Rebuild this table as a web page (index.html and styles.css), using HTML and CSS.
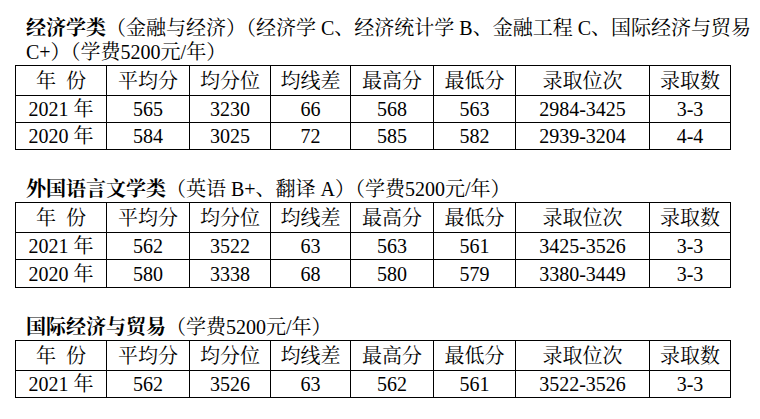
FILE: index.html
```html
<!DOCTYPE html>
<html lang="zh-CN">
<head>
<meta charset="utf-8">
<title>录取数据</title>
<link rel="stylesheet" href="styles.css">
</head>
<body>
<div class="page">
  <section class="block">
    <div class="title"><b>经济学类</b>（金融与经济）（经济学 C、经济统计学 B、金融工程 C、国际经济与贸易<br>C+）（学费5200元/年）</div>
    <table class="grid">
      <colgroup><col class="c1"><col class="c2"><col class="c3"><col class="c4"><col class="c5"><col class="c6"><col class="c7"><col class="c8"></colgroup>
      <tr class="head"><td>年&ensp;份</td><td>平均分</td><td>均分位</td><td>均线差</td><td>最高分</td><td>最低分</td><td>录取位次</td><td>录取数</td></tr>
      <tr><td>2021 年</td><td>565</td><td>3230</td><td>66</td><td>568</td><td>563</td><td>2984-3425</td><td>3-3</td></tr>
      <tr><td>2020 年</td><td>584</td><td>3025</td><td>72</td><td>585</td><td>582</td><td>2939-3204</td><td>4-4</td></tr>
    </table>
  </section>
  <section class="block">
    <div class="title"><b>外国语言文学类</b>（英语 B+、翻译 A）（学费5200元/年）</div>
    <table class="grid">
      <colgroup><col class="c1"><col class="c2"><col class="c3"><col class="c4"><col class="c5"><col class="c6"><col class="c7"><col class="c8"></colgroup>
      <tr class="head"><td>年&ensp;份</td><td>平均分</td><td>均分位</td><td>均线差</td><td>最高分</td><td>最低分</td><td>录取位次</td><td>录取数</td></tr>
      <tr><td>2021 年</td><td>562</td><td>3522</td><td>63</td><td>563</td><td>561</td><td>3425-3526</td><td>3-3</td></tr>
      <tr class="tall"><td>2020 年</td><td>580</td><td>3338</td><td>68</td><td>580</td><td>579</td><td>3380-3449</td><td>3-3</td></tr>
    </table>
  </section>
  <section class="block">
    <div class="title"><b>国际经济与贸易</b>（学费5200元/年）</div>
    <table class="grid">
      <colgroup><col class="c1"><col class="c2"><col class="c3"><col class="c4"><col class="c5"><col class="c6"><col class="c7"><col class="c8"></colgroup>
      <tr class="head"><td>年&ensp;份</td><td>平均分</td><td>均分位</td><td>均线差</td><td>最高分</td><td>最低分</td><td>录取位次</td><td>录取数</td></tr>
      <tr><td>2021 年</td><td>562</td><td>3526</td><td>63</td><td>562</td><td>561</td><td>3522-3526</td><td>3-3</td></tr>
    </table>
  </section>
</div>
</body>
</html>
```

FILE: styles.css
```css
html, body {
  margin: 0;
  padding: 0;
  background: #ffffff;
}

body {
  font-family: "Liberation Serif", "Noto Serif CJK SC", "Noto Sans CJK SC", serif;
  color: #000;
  font-size: 20px;
}

.page {
  padding: 16px 0 0 15px;
  display: flex;
  flex-direction: column;
  gap: 27px;
}

.block {
  display: flex;
  flex-direction: column;
}

.title {
  padding-left: 11px;
  line-height: 24px;
  white-space: nowrap;
  margin-bottom: 1px;
}

.title b {
  font-weight: 700;
}

.grid {
  border-collapse: collapse;
  table-layout: fixed;
  width: 716px;
}

.grid td {
  border: 1px solid #000;
  padding: 0;
  text-align: center;
  vertical-align: middle;
  height: 26px;
  line-height: 22px;
  white-space: nowrap;
}

.grid tr.head td {
  height: 29px;
}

.grid tr.tall td {
  height: 27px;
}

.c1 { width: 91px; }
.c2 { width: 83px; }
.c3 { width: 81px; }
.c4 { width: 80px; }
.c5 { width: 83px; }
.c6 { width: 82px; }
.c7 { width: 134px; }
.c8 { width: 81px; }
```
